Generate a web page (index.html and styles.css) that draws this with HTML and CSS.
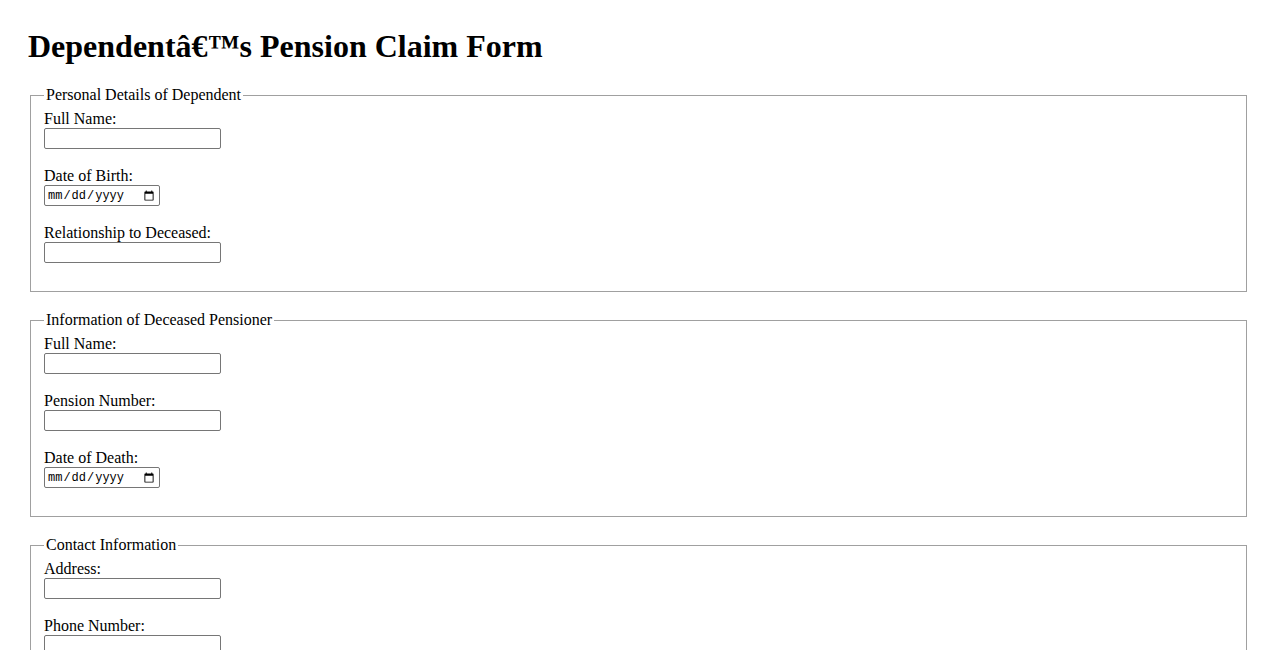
FILE: index.html
```html
<!DOCTYPE html>
<html lang="en">
<head>
<meta charset="utf-8">
<title>Dependent's Pension Claim Form</title>
<link rel="stylesheet" href="styles.css">
</head>
<body>
<h1 class="title">Dependentâ€™s Pension Claim Form</h1>
<form class="claim">
  <fieldset class="group">
    <legend class="group-title">Personal Details of Dependent</legend>
    <label class="field-label" for="dep-name">Full Name:</label><br>
    <input class="text-input" type="text" id="dep-name"><br><br>
    <label class="field-label" for="dep-dob">Date of Birth:</label><br>
    <input class="date-input" type="date" id="dep-dob"><br><br>
    <label class="field-label" for="dep-rel">Relationship to Deceased:</label><br>
    <input class="text-input" type="text" id="dep-rel"><br><br>
  </fieldset>
  <fieldset class="group">
    <legend class="group-title">Information of Deceased Pensioner</legend>
    <label class="field-label" for="dec-name">Full Name:</label><br>
    <input class="text-input" type="text" id="dec-name"><br><br>
    <label class="field-label" for="dec-num">Pension Number:</label><br>
    <input class="text-input" type="text" id="dec-num"><br><br>
    <label class="field-label" for="dec-dod">Date of Death:</label><br>
    <input class="date-input" type="date" id="dec-dod"><br><br>
  </fieldset>
  <fieldset class="group">
    <legend class="group-title">Contact Information</legend>
    <label class="field-label" for="addr">Address:</label><br>
    <input class="text-input" type="text" id="addr"><br><br>
    <label class="field-label" for="phone">Phone Number:</label><br>
    <input class="text-input" type="tel" id="phone"><br><br>
    <label class="field-label" for="email">Email:</label><br>
    <input class="text-input" type="email" id="email"><br><br>
  </fieldset>
</form>
</body>
</html>
```
FILE: styles.css
```css
body {
  margin: 28px;
  font-family: "Liberation Serif", "Times New Roman", serif;
  font-size: 16px;
  color: #000;
  background: #fff;
}
.title {
  font-size: 32px;
  font-weight: bold;
  margin: 0 0 21px;
}
.claim {
  line-height: 18px;
}
.group {
  margin: 0 3px 19px 2px;
  padding: 6px 13px 10px 13px;
  border: 1px solid #a0a0a0;
}
.group-title {
  padding: 0 2px;
}
.text-input {
  box-sizing: border-box;
  width: 177px;
  height: 21px;
  border: 1px solid #767676;
  border-radius: 2px;
  font-family: "Liberation Sans", Arial, sans-serif;
  font-size: 13px;
  padding: 1px 2px;
  margin: 0;
  vertical-align: top;
}
.date-input {
  box-sizing: border-box;
  width: 116px;
  height: 21px;
  border: 1px solid #767676;
  border-radius: 2px;
  font-family: "Liberation Mono", monospace;
  font-size: 12px;
  padding: 1px 2px;
  margin: 0;
  vertical-align: top;
}
```
